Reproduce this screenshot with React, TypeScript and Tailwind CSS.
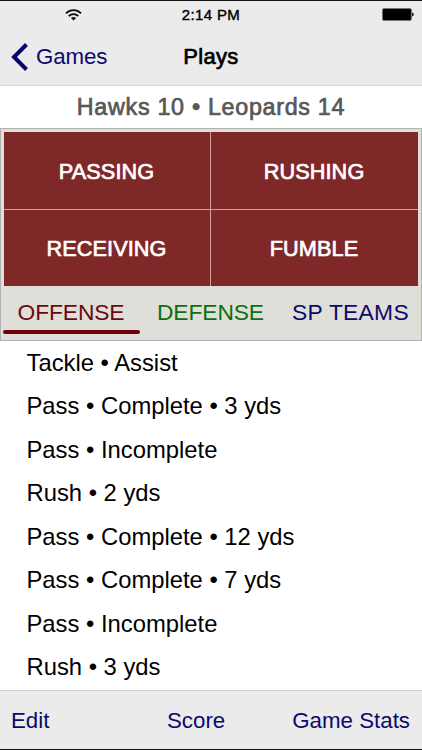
import React, { useState } from 'react';

const categories = ['PASSING', 'RUSHING', 'RECEIVING', 'FUMBLE'];

const tabs = [
  { label: 'OFFENSE', color: 'text-[#680b10]', bar: 'bg-[#6f0007]', spacing: 'tracking-[-0.1px]' },
  { label: 'DEFENSE', color: 'text-[#0a7011]', bar: 'bg-[#0a7011]', spacing: 'tracking-[-0.1px]' },
  { label: 'SP TEAMS', color: 'text-[#0b0a6c]', bar: 'bg-[#0b0a6c]', spacing: 'tracking-[0.3px]' },
];

const plays = [
  'Tackle • Assist',
  'Pass • Complete • 3 yds',
  'Pass • Incomplete',
  'Rush • 2 yds',
  'Pass • Complete • 12 yds',
  'Pass • Complete • 7 yds',
  'Pass • Incomplete',
  'Rush • 3 yds',
];

function WifiIcon() {
  return (
    <svg width="17" height="12" viewBox="0 0 17 12" fill="none" stroke="#0a0a0a" strokeWidth="1.8">
      <path d="M1 4.3C5.2 0.1 11.8 0.1 16 4.3" />
      <path d="M3.7 7.1C6.4 4.4 10.6 4.4 13.3 7.1" />
      <path d="M8.5 11.6L5.9 9C7.3 7.6 9.7 7.6 11.1 9Z" fill="#0a0a0a" stroke="none" />
    </svg>
  );
}

function BatteryIcon() {
  return (
    <svg width="32" height="13" viewBox="0 0 32 13">
      <rect x="0.4" y="0.4" width="29" height="12.2" rx="1.6" fill="#000" stroke="#777" strokeWidth="0.8" />
      <path d="M30.2 4.5C32.2 5 32.2 8 30.2 8.5Z" fill="#000" />
    </svg>
  );
}

export default function App() {
  const [activeTab, setActiveTab] = useState('OFFENSE');

  return (
    <div className="flex h-[750px] w-[422px] flex-col overflow-hidden border-y border-[#111] bg-white font-['Liberation_Sans',sans-serif] text-black">
      {/* Status bar and navigation */}
      <header className="h-[85px] shrink-0 border-b border-[#d6d6d6] bg-[#ebebeb]">
        <div className="grid h-[27px] grid-cols-3 items-center">
          <div className="pl-[65px]">
            <WifiIcon />
          </div>
          <span className="whitespace-nowrap text-center text-[15px] leading-none tracking-[0.35px] [-webkit-text-stroke:0.4px_black]">
            2:14 PM
          </span>
          <div className="flex justify-end pr-2">
            <BatteryIcon />
          </div>
        </div>
        <div className="grid h-[57px] grid-cols-3 items-center">
          <button className="flex items-center gap-2 pl-[11px] text-[22.3px] leading-none text-[#0b0a6c]">
            <svg width="17" height="28" viewBox="0 0 17 28" fill="none" stroke="#05056d" strokeWidth="4">
              <path d="M15.5 1.5L3 14L15.5 26.5" />
            </svg>
            <span className="pt-0.5 tracking-[-0.1px]">Games</span>
          </button>
          <h1 className="text-center text-[22px] leading-none tracking-[0.3px] [-webkit-text-stroke:0.7px_black]">
            Plays
          </h1>
        </div>
      </header>

      <div className="flex h-[42px] shrink-0 items-center justify-center whitespace-nowrap pt-px text-[23.3px] leading-none tracking-[0.7px] text-[#585858] [-webkit-text-stroke:0.7px_#585858]">
        Hawks 10 • Leopards 14
      </div>

      {/* Play entry panel */}
      <section className="flex h-[213px] shrink-0 flex-col border border-[#b2b2b2] bg-[#dfded9] px-[3px] pt-[3px]">
        <div className="grid h-[154px] shrink-0 grid-cols-[206px_1fr] grid-rows-2 gap-px bg-[#cfa3a1]">
          {categories.map((category) => (
            <button
              key={category}
              className="bg-[#7f2828] pr-px pt-[3px] text-[21.7px] leading-none tracking-[0.1px] text-white [-webkit-text-stroke:0.7px_white]"
            >
              {category}
            </button>
          ))}
        </div>
        <div className="-mx-[1px] grid grow grid-cols-[136px_143px_1fr]">
          {tabs.map((tab) => (
            <button
              key={tab.label}
              onClick={() => setActiveTab(tab.label)}
              className={`flex flex-col items-center justify-between whitespace-nowrap pb-[6px] pt-[14px] text-[22.8px] leading-[24px] ${tab.spacing} ${tab.color}`}
            >
              {tab.label}
              <span className={`h-1 w-[137px] rounded-full ${activeTab === tab.label ? tab.bar : 'bg-transparent'}`} />
            </button>
          ))}
        </div>
      </section>

      {/* Play log */}
      <ul className="grow overflow-hidden pl-[26.5px]">
        {plays.map((play, i) => (
          <li key={i} className="flex h-[43.5px] items-center whitespace-pre text-[23.8px] leading-none">
            {play}
          </li>
        ))}
      </ul>

      <footer className="grid h-[59px] shrink-0 grid-cols-[156px_72px_1fr] items-center border-t border-[#cfcfcf] bg-[#ebebeb] pl-[11px] pr-[12px] pt-0.5 text-[22.3px] leading-none text-[#0b0a6c]">
        <button className="text-left">Edit</button>
        <button className="text-left">Score</button>
        <button className="whitespace-nowrap text-right">Game Stats</button>
      </footer>
    </div>
  );
}
